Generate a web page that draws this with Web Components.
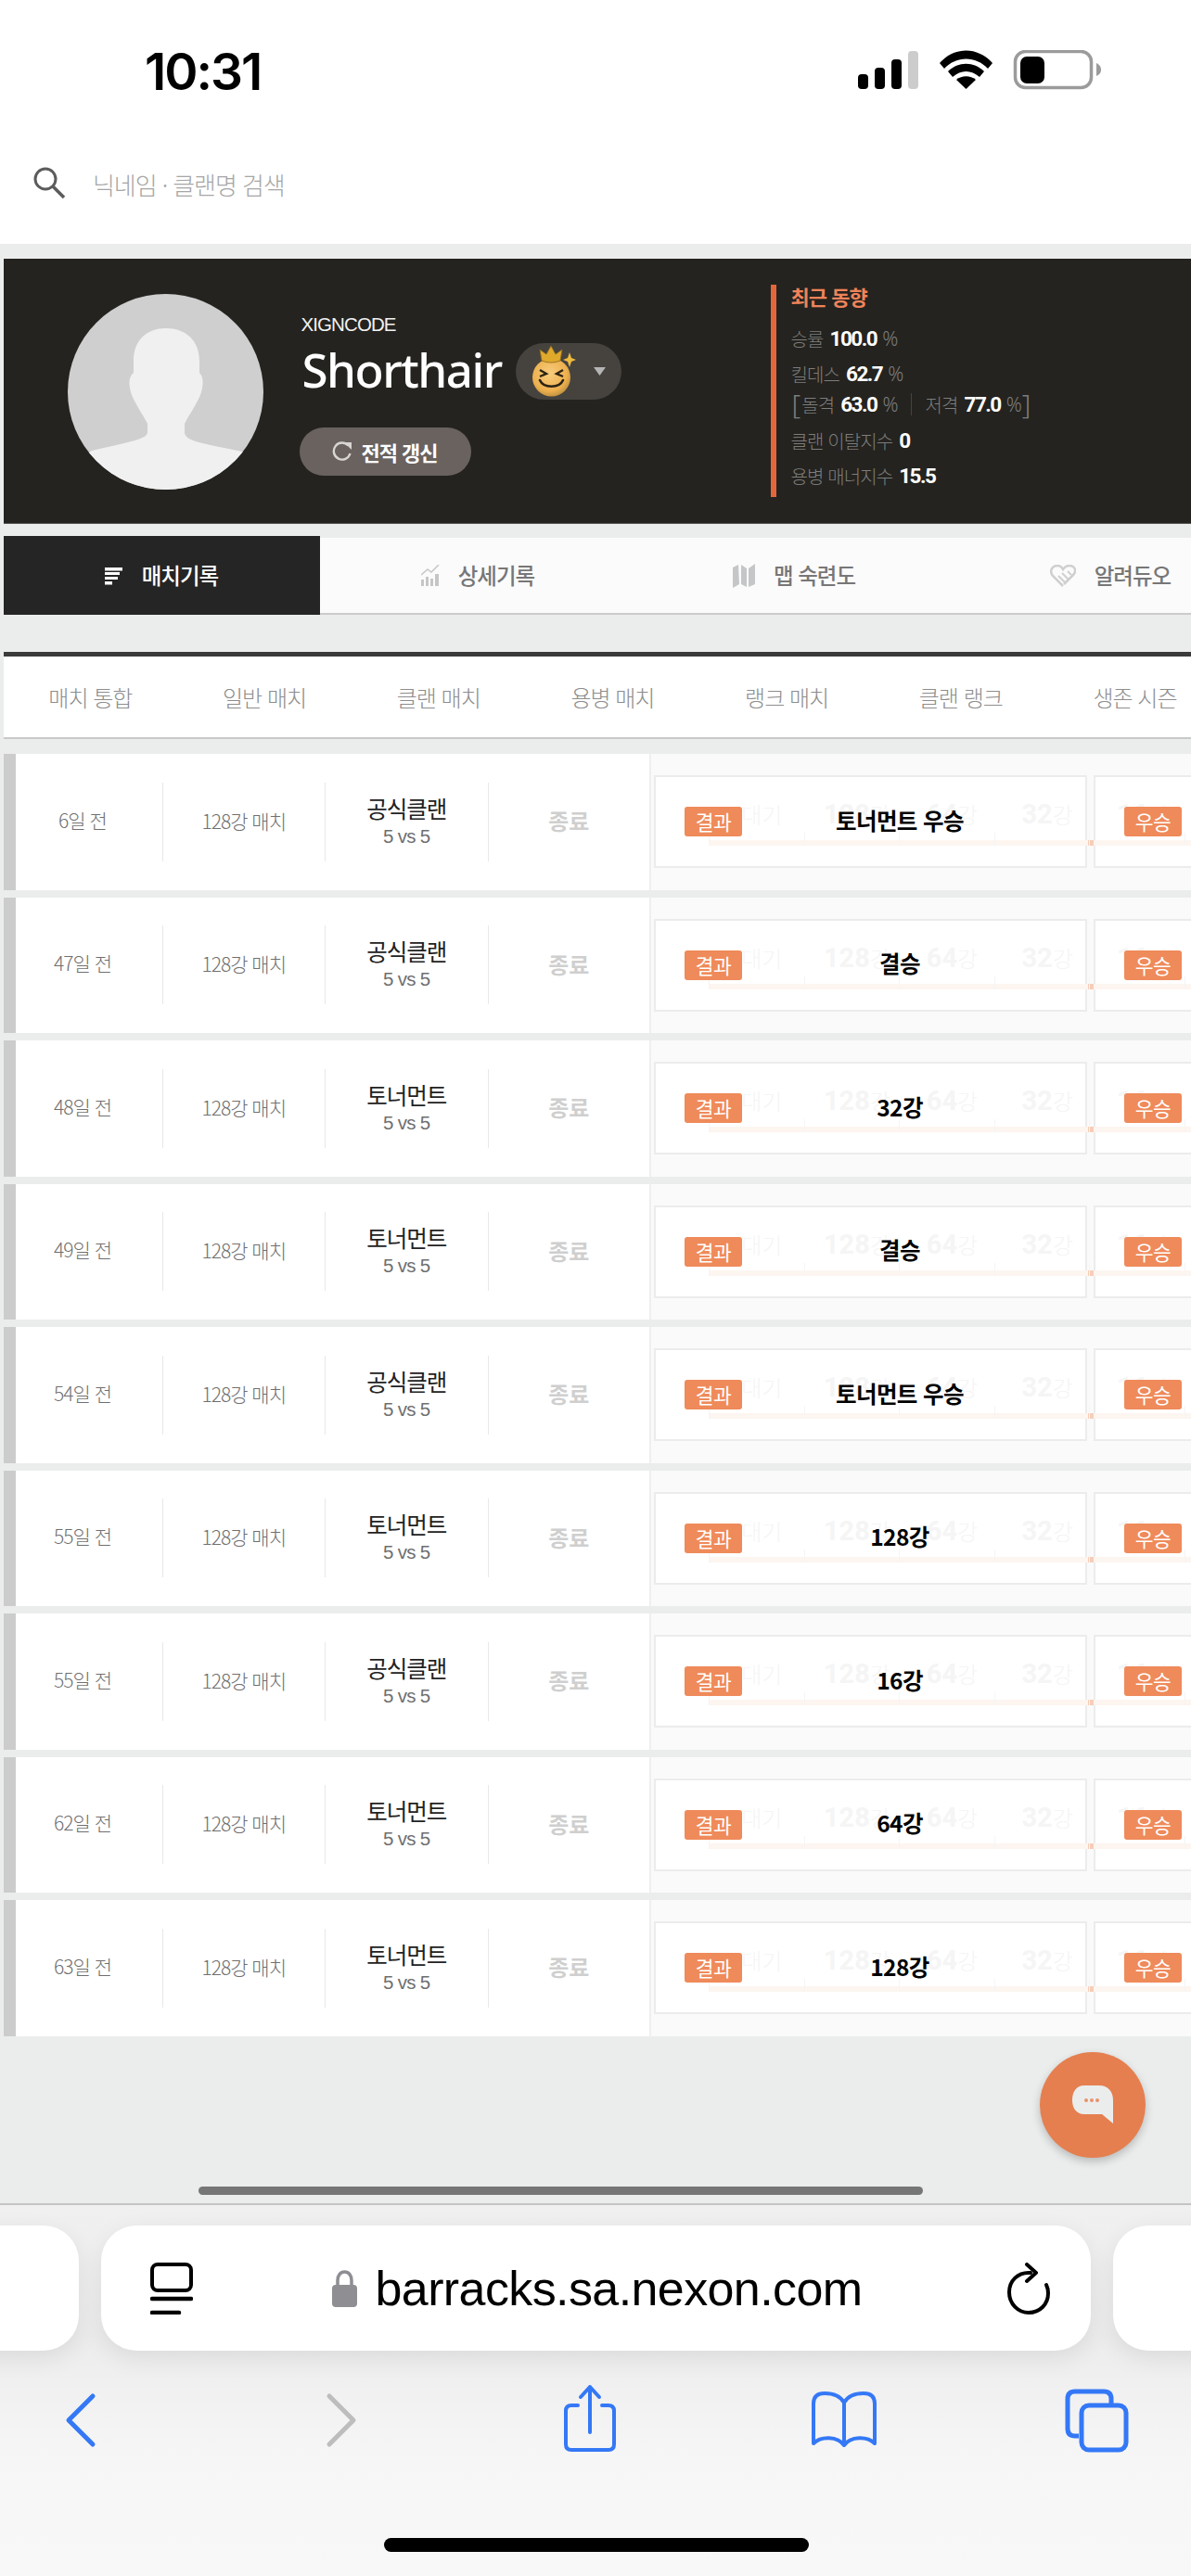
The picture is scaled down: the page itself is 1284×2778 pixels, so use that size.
<!DOCTYPE html>
<html lang="ko">
<head>
<meta charset="utf-8">
<title>barracks.sa.nexon.com</title>
<style>
html, body { margin: 0; padding: 0; }
body {
    width: 1284px;
    height: 2778px;
    overflow: hidden;
    display: flex;
    flex-direction: column;
    position: relative;
    background: #ebeded;
    font-family: "Noto Sans CJK KR", "Noto Sans", sans-serif;
}
.spacer { flex: 1; }
</style>
</head>
<body>
<top-header></top-header>
<player-profile name="Shorthair" clan="XIGNCODE"></player-profile>
<nav-tabs></nav-tabs>
<mode-tabs></mode-tabs>
<match-list>
    <match-row when="6일 전" mode="공식클랜" result="토너먼트 우승"></match-row>
    <match-row when="47일 전" mode="공식클랜" result="결승"></match-row>
    <match-row when="48일 전" mode="토너먼트" result="32강"></match-row>
    <match-row when="49일 전" mode="토너먼트" result="결승"></match-row>
    <match-row when="54일 전" mode="공식클랜" result="토너먼트 우승"></match-row>
    <match-row when="55일 전" mode="토너먼트" result="128강"></match-row>
    <match-row when="55일 전" mode="공식클랜" result="16강"></match-row>
    <match-row when="62일 전" mode="토너먼트" result="64강"></match-row>
    <match-row when="63일 전" mode="토너먼트" result="128강"></match-row>
</match-list>
<div class="spacer"></div>
<chat-fab></chat-fab>
<safari-bar url="barracks.sa.nexon.com"></safari-bar>

<script>
class TopHeader extends HTMLElement {
    constructor() {
        super();
        this.attachShadow({ mode: 'open' });
        this.shadowRoot.innerHTML = `
        <style>
        :host { display: block; height: 263px; background: #fff; flex: none; }
        .status {
            height: 150px;
            position: relative;
            display: flex;
            align-items: flex-start;
            justify-content: space-between;
            padding: 0 90px 0 156px;
        }
        .time {
            margin-top: 47px;
            font: 600 55px/60px Inter, "Liberation Sans", sans-serif;
            letter-spacing: -2px;
            color: #000;
        }
        .icons { margin-top: 54px; display: block; }
        .search {
            display: flex;
            align-items: center;
            gap: 29px;
            padding-left: 34px;
            height: 50px;
            margin-top: 23px;
        }
        .hint { font-size: 26px; letter-spacing: -1.1px; color: #a6a6a6; font-weight: 300; }
        </style>
        <div class="status">
            <div class="time">10:31</div>
            <svg class="icons" width="270" height="50" viewBox="0 0 270 50">
                <rect x="1" y="26" width="11" height="16" rx="4"/>
                <rect x="19" y="19" width="11" height="23" rx="4"/>
                <rect x="37" y="10" width="11" height="32" rx="4"/>
                <rect x="55" y="1" width="11" height="41" rx="4" fill="#ccc"/>
                <path d="M89 14 C105 -4 130 -4 146 14 L141 20 C128 6 107 6 94 20Z"/>
                <path d="M98 23 C109 12 126 12 137 23 L132 29 C123 21 112 21 103 29Z"/>
                <path d="M107 32 C113 27 122 27 128 32 L117.500 42Z"/>
                <rect x="170.500" y="1.500" width="82" height="39" rx="11" fill="none" stroke="#9b9b9b" stroke-width="3.500"/>
                <rect x="176" y="7" width="26" height="29" rx="7"/>
                <path d="M258 14 C262 16 263 19 263 21 C263 24 262 26 258 28Z" fill="#9b9b9b"/>
            </svg>
        </div>
        <div class="search">
            <svg width="37" height="36" viewBox="0 0 37 36" fill="none" stroke="#5c5c5c" stroke-width="3">
                <circle cx="15" cy="13" r="11"/>
                <path d="M23 21 L35 33" stroke-width="3.500"/>
            </svg>
            <span class="hint">닉네임 · 클랜명 검색</span>
        </div>`;
    }
}

class StatLine extends HTMLElement {
    constructor() {
        super();
        this.attachShadow({ mode: 'open' });
        this.shadowRoot.innerHTML = `
        <style>
        :host { display: inline-flex; align-items: center; gap: 7px; white-space: nowrap; }
        .label { font-size: 20px; letter-spacing: -0.9px; color: #7d7d7d; font-weight: 300; }
        .value { font: 700 22.500px/28px Roboto, sans-serif; letter-spacing: -1.500px; color: #fff; }
        .unit { font: 300 21px/28px "Noto Sans", sans-serif; color: #7d7d7d; margin-left: -1px; }
        </style>
        <span class="label"></span><span class="value"></span><span class="unit"></span>`;
    }

    connectedCallback() {
        this.shadowRoot.querySelector('.label').textContent = this.getAttribute('label');
        this.shadowRoot.querySelector('.value').textContent = this.getAttribute('value');
        this.shadowRoot.querySelector('.unit').textContent = this.getAttribute('unit') || '';
    }
}

class PlayerProfile extends HTMLElement {
    constructor() {
        super();
        this.attachShadow({ mode: 'open' });
        this.shadowRoot.innerHTML = `
        <style>
        :host {
            display: flex;
            flex: none;
            height: 286px;
            margin: 16px 0 0 3.5px;
            background: #24231f;
            border-bottom: 1px solid #55544f;
            box-sizing: border-box;
            align-items: center;
        }
        .avatar { display: block; margin: 2px 0 0 69px; flex: none; }
        .info { width: 508px; margin-left: 39px; flex: none; padding-top: 8px; box-sizing: border-box; }
        .clan { font: 400 20.500px/24px "Liberation Sans", sans-serif; letter-spacing: -0.9px; color: #f2f2f2; margin-left: 2px; }
        .name-row { display: flex; align-items: center; margin-top: 1px; }
        .name { font: 500 51px/70px "Noto Sans", sans-serif; color: #fff; letter-spacing: -1.500px; margin-left: 3px; }
        .tier {
            margin: 4px 0 0 15px;
            width: 114px;
            height: 61px;
            border-radius: 31px;
            background: #46433f;
            display: flex;
            align-items: center;
        }
        .refresh {
            margin-top: 28px;
            width: 185px;
            height: 52px;
            border-radius: 26px;
            background: #69625f;
            display: flex;
            align-items: center;
            justify-content: center;
            gap: 9px;
            font-size: 22px;
            font-weight: 700;
            letter-spacing: -1px;
            color: #fff;
        }
        .recent {
            border-left: 6px solid #e3673a;
            height: 229px;
            padding-left: 16px;
            box-sizing: border-box;
            display: flex;
            flex-direction: column;
            align-items: flex-start;
        }
        .title { font-size: 22px; line-height: 28px; font-weight: 700; letter-spacing: -1px; color: #f0835a; margin-top: -2px; }
        stat-line { height: 28px; }
        .first { margin-top: 18px; }
        .next { margin-top: 10px; }
        .wide { margin-top: 11px; }
        .split { display: flex; align-items: center; gap: 0; height: 28px; margin-top: 5px; margin-left: 1px; }
        .bracket { font: 300 30px/30px "Noto Sans", sans-serif; color: #7d7d7d; }
        .rule { width: 1px; height: 24px; background: #44433f; margin: 0 14px; }
        </style>
        <svg class="avatar" width="211" height="211" viewBox="0 0 211 211">
            <defs><clipPath id="round"><circle cx="105.500" cy="105.500" r="105.500"/></clipPath></defs>
            <g clip-path="url(#round)">
                <rect width="211" height="211" fill="#cfcfcf"/>
                <path fill="#f0f0f0" d="M71 72 C71 50 85 37 106 37 C127 37 142 50 142 72 L142 85
                    C147 90 146 98 144 106 C140 118 132 128 126 140 L126 150 C128 158 138 160 188 170
                    L211 185 L211 211 L0 211 L0 186 L26 169 C74 158 84 156 86 150 L86 140
                    C80 128 72 118 68 106 C66 98 65 90 71 85Z"/>
            </g>
        </svg>
        <div class="info">
            <div class="clan"></div>
            <div class="name-row">
                <div class="name"></div>
                <div class="tier">
                    <svg width="114" height="61" viewBox="0 0 114 61">
                        <defs>
                            <radialGradient id="face" cx="0.45" cy="0.4" r="0.65">
                                <stop offset="0" stop-color="#f7cd7e"/>
                                <stop offset="0.7" stop-color="#eeb04e"/>
                                <stop offset="1" stop-color="#b58a3c"/>
                            </radialGradient>
                        </defs>
                        <circle cx="38.500" cy="37" r="20.500" fill="url(#face)"/>
                        <path d="M28 19 L26 7 L33 12 L38 3 L43 12 L50 7 L48 19 Q38 23 28 19Z" fill="#dfa92c" stroke="#8a6a1c" stroke-width="0.800"/>
                        <path d="M58 10 L60 16 L65 18 L60 20 L58 26 L56 20 L51 18 L56 16Z" fill="#eebb3f"/>
                        <path d="M26 29 L33 33 L26 36 M51 29 L44 33 L51 36" fill="none" stroke="#2c2416" stroke-width="2.400"/>
                        <path d="M26 40 C30 49 47 49 51 40" fill="none" stroke="#2c2416" stroke-width="2.600" stroke-linecap="round"/>
                        <path d="M84 26 H97 L90.500 35Z" fill="#b5b5b5"/>
                    </svg>
                </div>
            </div>
            <div class="refresh">
                <svg width="22" height="22" viewBox="0 0 22 22" fill="none">
                    <path d="M17.500 4.500 A9 9 0 1 0 19.500 13" stroke="#d8d5d3" stroke-width="2.400"/>
                    <path d="M13 1 L21 1 L21 9Z" fill="#d8d5d3"/>
                </svg>
                <span>전적 갱신</span>
            </div>
        </div>
        <div class="recent">
            <div class="title">최근 동향</div>
            <stat-line class="first" label="승률" value="100.0" unit="%"></stat-line>
            <stat-line class="next" label="킬데스" value="62.7" unit="%"></stat-line>
            <div class="split">
                <span class="bracket">[</span>
                <stat-line style="margin-left:1px" label="돌격" value="63.0" unit="%"></stat-line>
                <span class="rule"></span>
                <stat-line label="저격" value="77.0" unit="%"></stat-line>
                <span class="bracket">]</span>
            </div>
            <stat-line class="wide" label="클랜 이탈지수" value="0"></stat-line>
            <stat-line class="next" label="용병 매너지수" value="15.5"></stat-line>
        </div>`;
    }

    connectedCallback() {
        this.shadowRoot.querySelector('.clan').textContent = this.getAttribute('clan');
        this.shadowRoot.querySelector('.name').textContent = this.getAttribute('name');
    }
}

class NavTabs extends HTMLElement {
    constructor() {
        super();
        this.attachShadow({ mode: 'open' });
        this.shadowRoot.innerHTML = `
        <style>
        :host {
            display: flex;
            flex: none;
            height: 85px;
            margin: 13px 0 0 3.5px;
            overflow: hidden;
        }
        .tab {
            flex: none;
            width: 341px;
            height: 83px;
            margin-top: 2px;
            box-sizing: border-box;
            border-bottom: 2px solid #cbcbcb;
            background: #fbfbfb;
            display: flex;
            align-items: center;
            justify-content: center;
            gap: 20px;
            font-size: 23.500px;
            font-weight: 500;
            letter-spacing: -1px;
            color: #777;
        }
        .tab.on {
            height: 85px;
            margin-top: 0;
            background: #252525;
            border: 0;
            color: #fff;
        }
        .tab span { position: relative; top: -1px; }
        svg { display: block; flex: none; }
        </style>
        <div class="tab on">
            <svg width="20" height="20" viewBox="0 0 20 20" fill="#fff">
                <rect y="1" width="19" height="3.500"/><rect y="6" width="16" height="3"/><rect y="11" width="14" height="3"/><rect y="16" width="8" height="3.500"/>
            </svg>
            <span>매치기록</span>
        </div>
        <div class="tab">
            <svg width="20" height="24" viewBox="0 0 20 24" fill="#c6c6c6">
                <rect x="0" y="16" width="3" height="7"/><rect x="5" y="13" width="3" height="10"/><rect x="10" y="15" width="3" height="8"/><rect x="15" y="10" width="4" height="13"/>
                <path d="M0 11 L7 5 L11 8 L19 0" fill="none" stroke="#c6c6c6" stroke-width="1.500"/>
            </svg>
            <span>상세기록</span>
        </div>
        <div class="tab">
            <svg width="24" height="26" viewBox="0 0 24 26" fill="#c4c6c8">
                <path d="M0 4 L6 1 L7 22 L0 26Z"/><path d="M9 1 L15 5 L15 25 L9 22Z"/><path d="M17 5 L24 0 L24 22 L17 25Z"/>
            </svg>
            <span>맵 숙련도</span>
        </div>
        <div class="tab">
            <svg width="28" height="24" viewBox="0 0 28 24" fill="none" stroke="#cfcfcf" stroke-width="2.500">
                <path d="M14 23 L3 12 C-1 7 2 1 8 1 C11 1 13 3 14 5 C16 2 19 1 21 1 C27 1 29 7 25 11 L15 21"/>
                <path d="M9 12 L16 19 M13 9 L20 16 M19 7 L23 11" stroke-width="2"/>
            </svg>
            <span>알려듀오</span>
        </div>`;
    }
}

class ModeTabs extends HTMLElement {
    constructor() {
        super();
        this.attachShadow({ mode: 'open' });
        const names = ['매치 통합', '일반 매치', '클랜 매치', '용병 매치', '랭크 매치', '클랜 랭크', '생존 시즌'];
        this.shadowRoot.innerHTML = `
        <style>
        :host {
            display: flex;
            flex: none;
            height: 94px;
            margin: 40px 0 0 3.5px;
            box-sizing: border-box;
            background: #fff;
            border-top: 5px solid #3b3b3b;
            border-bottom: 2px solid #c8c8c8;
            overflow: hidden;
        }
        div {
            flex: none;
            width: 187.700px;
            text-align: center;
            font-size: 24px;
            font-weight: 300;
            line-height: 88px;
            letter-spacing: -1px;
            color: #8d8d8d;
        }
        </style>
        ${names.map(n => `<div>${n}</div>`).join('')}`;
    }
}

class MatchList extends HTMLElement {
    constructor() {
        super();
        this.attachShadow({ mode: 'open' });
        this.shadowRoot.innerHTML = `
        <style>
        :host {
            display: flex;
            flex-direction: column;
            flex: none;
            gap: 8px;
            margin: 16px 0 0 3.5px;
        }
        </style>
        <slot></slot>`;
    }
}

class MatchRow extends HTMLElement {
    constructor() {
        super();
        this.attachShadow({ mode: 'open' });
        this.shadowRoot.innerHTML = `
        <style>
        :host {
            display: grid;
            grid-template-columns: 696.500px 1fr;
            height: 146.500px;
            background: #fff;
        }
        .info {
            display: grid;
            grid-template-columns: 171px 175.500px 175.500px 174.500px;
            align-items: center;
            position: relative;
        }
        .info::before {
            content: '';
            position: absolute;
            left: 0;
            top: 0;
            bottom: 0;
            width: 13px;
            background: #cccccc;
        }
        .cell {
            height: 85px;
            box-sizing: border-box;
            padding-bottom: 3px;
            display: flex;
            flex-direction: column;
            align-items: center;
            justify-content: center;
            border-left: 1px solid #e8e8e8;
            font-size: 21px;
            letter-spacing: -1px;
            font-weight: 300;
            color: #6f6f6f;
            text-align: center;
        }
        .cell:first-child { border-left: 0; padding-bottom: 5px; }
        .mode { font-size: 24.500px; line-height: 32px; font-weight: 400; color: #222; margin-top: 1px; }
        .size { font: 400 20.500px/27px "Liberation Sans", sans-serif; letter-spacing: -0.7px; color: #6f6f6f; }
        .state { font-size: 24px; font-weight: 700; letter-spacing: 0; color: #cfcfcf; }
        .bracket {
            position: relative;
            overflow: hidden;
            background: #fafafa;
            border-left: 2px solid #efefef;
            box-sizing: border-box;
            display: flex;
            align-items: center;
            gap: 7px;
            padding-left: 3px;
        }
        .card {
            flex: none;
            width: 467px;
            height: 100px;
            box-sizing: border-box;
            border: 2px solid #ececec;
            background: #fff;
            display: flex;
            align-items: center;
            padding: 0 30px 0 31px;
        }
        .badge {
            position: relative;
            z-index: 2;
            flex: none;
            width: 62px;
            height: 32px;
            border-radius: 3px;
            background: #ef8a5a;
            color: #fff;
            font-size: 21.500px;
            line-height: 31px;
            text-align: center;
            letter-spacing: -0.5px;
        }
        .result {
            position: relative;
            z-index: 2;
            top: -2px;
            flex: 1;
            text-align: center;
            font-size: 24.500px;
            font-weight: 700;
            letter-spacing: -0.6px;
            color: #000;
        }
        .tree {
            position: absolute;
            z-index: 1;
            left: 62px;
            top: 0;
            right: 0;
            height: 100%;
            display: flex;
        }
        .step {
            flex: none;
            width: 102.600px;
            height: 100%;
            position: relative;
        }
        .step span {
            position: absolute;
            left: 0;
            right: 0;
            top: 49px;
            line-height: 32px;
            text-align: center;
            font-size: 24px;
            font-weight: 300;
            color: #f5f5f5;
            padding-left: 12px;
            box-sizing: border-box;
        }
        .step b { font: 700 29px/32px Roboto, sans-serif; color: #f5f5f5; }
        .step::after {
            content: '';
            position: absolute;
            left: 0;
            top: 85px;
            height: 14px;
            width: 1px;
            background: #f5f5f5;
        }
        .track {
            position: absolute;
            z-index: 1;
            left: 62px;
            right: 0;
            top: 93px;
            height: 6px;
            background: #fdf5f0;
        }
        .mark {
            position: absolute;
            z-index: 1;
            left: 471px;
            top: 93px;
            width: 6px;
            height: 6px;
            background: #f7cdb8;
        }
        </style>
        <div class="info">
            <div class="cell when"></div>
            <div class="cell">128강 매치</div>
            <div class="cell"><div class="mode"></div><div class="size">5 vs 5</div></div>
            <div class="cell state">종료</div>
        </div>
        <div class="bracket">
            <div class="card"><span class="badge">결과</span><span class="result"></span></div>
            <div class="card"><span class="badge">우승</span></div>
            <div class="track"></div>
            <div class="mark"></div>
            <div class="tree">
                <div class="step"><span>대기</span></div>
                <div class="step"><span><b>128</b>강</span></div>
                <div class="step"><span><b>64</b>강</span></div>
                <div class="step"><span><b>32</b>강</span></div>
                <div class="step"><span><b>16</b>강</span></div>
                <div class="step"><span><b>8</b>강</span></div>
            </div>
        </div>`;
    }

    connectedCallback() {
        this.shadowRoot.querySelector('.when').textContent = this.getAttribute('when');
        this.shadowRoot.querySelector('.mode').textContent = this.getAttribute('mode');
        this.shadowRoot.querySelector('.result').textContent = this.getAttribute('result');
    }
}

class ChatFab extends HTMLElement {
    constructor() {
        super();
        this.attachShadow({ mode: 'open' });
        this.shadowRoot.innerHTML = `
        <style>
        :host {
            position: absolute;
            left: 1121px;
            top: 2213px;
            width: 114px;
            height: 114px;
            border-radius: 50%;
            background: #e57f4f;
            box-shadow: 0 4px 10px rgba(0, 0, 0, 0.22);
            display: flex;
            align-items: center;
            justify-content: center;
        }
        </style>
        <svg width="46" height="42" viewBox="0 0 46 42">
            <path fill="#ebeded" d="M14 0 H30 C40 0 45 7 45 16 V41 L33 31 H14 C5 31 1 24 1 16 C1 7 5 0 14 0Z"/>
            <circle cx="16" cy="16" r="2" fill="#e9916a"/><circle cx="22" cy="16" r="2" fill="#e9916a"/><circle cx="28" cy="16" r="2" fill="#e9916a"/>
        </svg>`;
    }
}

class SafariBar extends HTMLElement {
    constructor() {
        super();
        this.attachShadow({ mode: 'open' });
        this.shadowRoot.innerHTML = `
        <style>
        :host {
            display: block;
            flex: none;
            height: 402px;
            box-sizing: border-box;
            position: relative;
            border-top: 2px solid #c4c4c4;
            background: linear-gradient(#f0f0f0, #ececec 35%, #f6f6f6 68%, #f8f8f8);
        }
        .thumb {
            position: absolute;
            top: -20px;
            left: 214px;
            width: 781px;
            height: 9px;
            border-radius: 5px;
            background: #767676;
        }
        .tiles {
            display: flex;
            justify-content: center;
            gap: 24px;
            padding-top: 22px;
            overflow: hidden;
            height: 189px;
            box-sizing: border-box;
        }
        .tile {
            flex: none;
            width: 1067px;
            height: 135px;
            border-radius: 38px;
            background: #fff;
            box-shadow: 0 8px 26px rgba(0, 0, 0, 0.08);
        }
        .url {
            display: flex;
            align-items: center;
            justify-content: space-between;
            padding: 0 43px 0 53px;
            box-sizing: border-box;
        }
        .site { display: flex; align-items: center; gap: 20px; margin-left: -7px; }
        .site span {
            font: 400 52px/60px "Liberation Sans", sans-serif;
            color: #000;
            letter-spacing: -0.6px;
        }
        .tools {
            display: flex;
            justify-content: space-between;
            padding: 0 62px 0 46px;
        }
        .home {
            position: absolute;
            left: 414px;
            top: 359px;
            width: 458px;
            height: 15px;
            border-radius: 8px;
            background: #000;
        }
        svg { display: block; flex: none; }
        </style>
        <div class="thumb"></div>
        <div class="tiles">
            <div class="tile"></div>
            <div class="tile url">
                <svg width="46" height="56" viewBox="0 0 46 56" fill="none" stroke="#000" stroke-width="4">
                    <rect x="2" y="2" width="42" height="28" rx="6"/>
                    <path d="M2 39 H44 M2 54 H31" stroke-linecap="round" stroke-width="4.500"/>
                </svg>
                <div class="site">
                    <svg width="27" height="40" viewBox="0 0 27 40">
                        <path d="M6 18 V11 C6 6 9 2 13.500 2 C18 2 21 6 21 11 V18" fill="none" stroke="#8e8e93" stroke-width="3.500"/>
                        <rect x="0" y="16" width="27" height="24" rx="4" fill="#8e8e93"/>
                    </svg>
                    <span></span>
                </div>
                <svg width="46" height="56" viewBox="0 0 46 56" fill="none" stroke="#000" stroke-width="4" stroke-linecap="round" stroke-linejoin="round">
                    <path d="M25 11 C11 10 2 20 2 32 C2 45 12 54 23 54 C35 54 44 45 44 33 C44 29 43 26 42 24"/>
                    <path d="M21 2 L31 11 L21 20"/>
                </svg>
            </div>
            <div class="tile"></div>
        </div>
        <div class="tools">
            <svg width="80" height="80" viewBox="0 0 80 80" fill="none" stroke="#3478f6" stroke-width="5" stroke-linecap="round" stroke-linejoin="round">
                <path d="M54 17 L28 43 L54 69"/>
            </svg>
            <svg width="80" height="80" viewBox="0 0 80 80" fill="none" stroke="#bdbdbd" stroke-width="5" stroke-linecap="round" stroke-linejoin="round">
                <path d="M35 17 L61 43 L35 69"/>
            </svg>
            <svg width="80" height="80" viewBox="0 0 80 80" fill="none" stroke="#3478f6" stroke-width="4" stroke-linecap="round" stroke-linejoin="round">
                <path d="M29 27 H22 Q16 27 16 33 V69 Q16 75 22 75 H62 Q68 75 68 69 V33 Q68 27 62 27 H55"/>
                <path d="M42 56 V7 M32 18 L42 7 L52 18"/>
            </svg>
            <svg width="80" height="80" viewBox="0 0 80 80" fill="none" stroke="#3478f6" stroke-width="4" stroke-linejoin="round">
                <path d="M42 24 C38 17 30 14 21 14 C13 14 9 18 9 25 V68 C17 60 35 60 42 70 C49 60 67 60 75 68 V25 C75 18 71 14 63 14 C54 14 46 17 42 24Z"/>
                <path d="M42 24 V70"/>
            </svg>
            <svg width="80" height="80" viewBox="0 0 80 80" fill="none" stroke="#3478f6" stroke-width="5" stroke-linejoin="round">
                <path d="M21 60 H17 Q9 60 9 52 V20 Q9 12 17 12 H48 Q56 12 56 20 V26"/>
                <rect x="24" y="27" width="48" height="48" rx="8"/>
            </svg>
        </div>
        <div class="home"></div>`;
    }

    connectedCallback() {
        this.shadowRoot.querySelector('.site span').textContent = this.getAttribute('url');
    }
}

customElements.define('top-header', TopHeader);
customElements.define('stat-line', StatLine);
customElements.define('player-profile', PlayerProfile);
customElements.define('nav-tabs', NavTabs);
customElements.define('mode-tabs', ModeTabs);
customElements.define('match-list', MatchList);
customElements.define('match-row', MatchRow);
customElements.define('chat-fab', ChatFab);
customElements.define('safari-bar', SafariBar);
</script>
</body>
</html>
